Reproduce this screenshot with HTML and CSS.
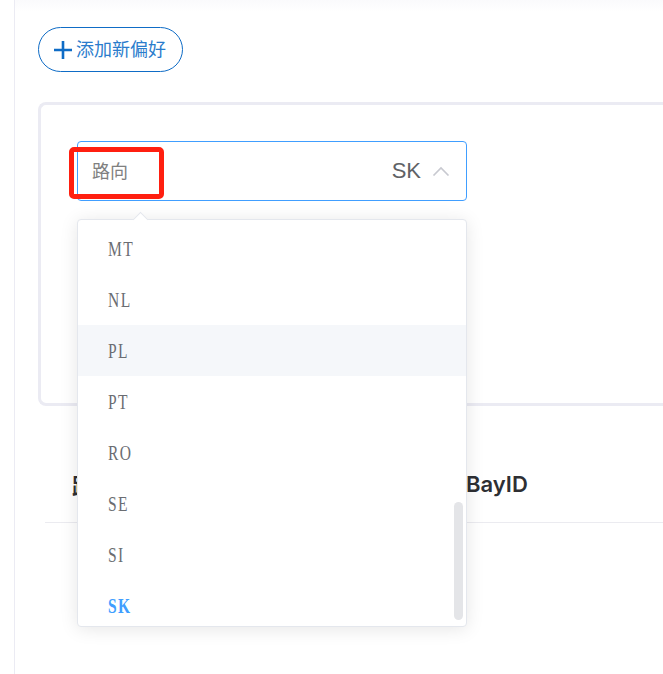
FILE: index.html
```html
<!DOCTYPE html>
<html lang="zh">
<head>
<meta charset="utf-8">
<title>偏好</title>
<link rel="stylesheet" href="styles.css">
</head>
<body>
<main class="panel">
  <button class="add-btn" type="button">
    <svg class="add-icon" viewBox="0 0 18 18" width="18" height="18" aria-hidden="true"><path d="M9 0v18M0 9h18" /></svg>
    <span class="add-text">添加新偏好</span>
  </button>
  <section class="card">
    <div class="select">
      <span class="select-label">路向</span>
      <span class="select-value">SK</span>
      <svg class="chevron" viewBox="0 0 18 10" width="18" height="10" aria-hidden="true"><path d="M1.5 9.5 9 2l7.500 7.500" /></svg>
      <div class="dropdown">
        <span class="arrow"></span>
        <ul class="options">
          <li><span>MT</span></li>
          <li><span>NL</span></li>
          <li class="hover"><span>PL</span></li>
          <li><span>PT</span></li>
          <li><span>RO</span></li>
          <li><span>SE</span></li>
          <li><span>SI</span></li>
          <li class="selected"><span>SK</span></li>
        </ul>
        <span class="scroll-thumb"></span>
      </div>
      <span class="annotation"></span>
    </div>
  </section>
  <div class="table-head">
    <span class="col-first">路向</span>
    <span class="col-bay">BayID</span>
  </div>
</main>
</body>
</html>
```
FILE: styles.css
```css
* { box-sizing: border-box; }
html, body { margin: 0; height: 100%; }
body {
  background: #fff;
  overflow: hidden;
  font-family: Inter, "Noto Sans CJK SC", sans-serif;
  padding-left: 14px;
}
.panel {
  height: 674px;
  border-left: 1px solid #ebebf3;
  padding: 27px 0 0 23px;
  background: linear-gradient(#fafafc, #fff 12px);
}
.add-btn {
  display: flex;
  align-items: center;
  gap: 4px;
  width: 145px;
  height: 45px;
  padding: 0 0 0 15px;
  border: 1px solid #0f6cc6;
  border-radius: 23px;
  background: #fff;
  color: #2a7ccc;
  font: 18px/24px "Noto Sans CJK SC", sans-serif;
}
.add-text { padding-bottom: 3px; }
.add-icon { fill: none; stroke: #0f6cc6; stroke-width: 2.6; flex: none; }
.card {
  height: 304px;
  margin-top: 30px;
  padding: 36px;
  border: 3px solid #ebebf3;
  border-right: 0;
  border-radius: 8px 0 0 8px;
  background: #fff;
}
.select {
  position: relative;
  display: flex;
  align-items: center;
  width: 390px;
  height: 60px;
  padding: 0 16px 0 14px;
  border: 1px solid #409eff;
  border-radius: 4px;
  background: #fff;
}
.select-label { font: 18px/24px "Noto Sans CJK SC", sans-serif; color: #808080; padding-bottom: 3px; }
.select-value { margin-left: auto; margin-right: 11px; font: 22px "Liberation Sans", sans-serif; color: #606266; }
.chevron { fill: none; stroke: #c8c9d0; stroke-width: 1.600; }
.dropdown {
  position: absolute;
  top: 77px;
  left: -1px;
  width: 390px;
  height: 408px;
  border: 1px solid #e4e7ed;
  border-radius: 4px;
  background: #fff;
  box-shadow: 0 2px 18px rgba(0, 0, 0, .1);
  z-index: 2;
}
.arrow {
  position: absolute;
  top: -6px;
  left: 57px;
  width: 11px;
  height: 11px;
  background: #fff;
  border: 1px solid #e4e7ed;
  border-right: 0;
  border-bottom: 0;
  transform: rotate(45deg);
}
.options {
  list-style: none;
  margin: 0;
  padding: 0;
  height: 100%;
  overflow: hidden;
  border-radius: 4px;
  position: relative;
}
.options li {
  height: 51px;
  padding-left: 30px;
  font: 21px/52px "Liberation Serif", serif;
  color: #6b6d72;
}
.options li span {
  display: inline-block;
  letter-spacing: 2px;
  transform: scaleX(.74);
  transform-origin: left center;
}
.options li:first-child { margin-top: 3px; }
.options li.hover { background: #f5f7fa; }
.options li.selected { color: #409eff; font-weight: 700; }
.scroll-thumb {
  position: absolute;
  right: 3px;
  top: 282px;
  width: 9px;
  height: 118px;
  border-radius: 5px;
  background: #e4e5e8;
}
.annotation {
  position: absolute;
  left: -9px;
  top: 5px;
  width: 95px;
  height: 52px;
  border: 5px solid #ff1f10;
  border-radius: 5px;
  z-index: 3;
}
.table-head {
  display: flex;
  align-items: center;
  height: 117px;
  margin-left: 7px;
  padding-top: 40px;
  border-bottom: 1px solid #ebebf0;
  font-size: 22px;
  font-weight: 600;
  color: #2e2f33;
}
.col-first { margin-left: 27px; font-weight: 700; }
.col-bay { margin-left: 350px; }
```
